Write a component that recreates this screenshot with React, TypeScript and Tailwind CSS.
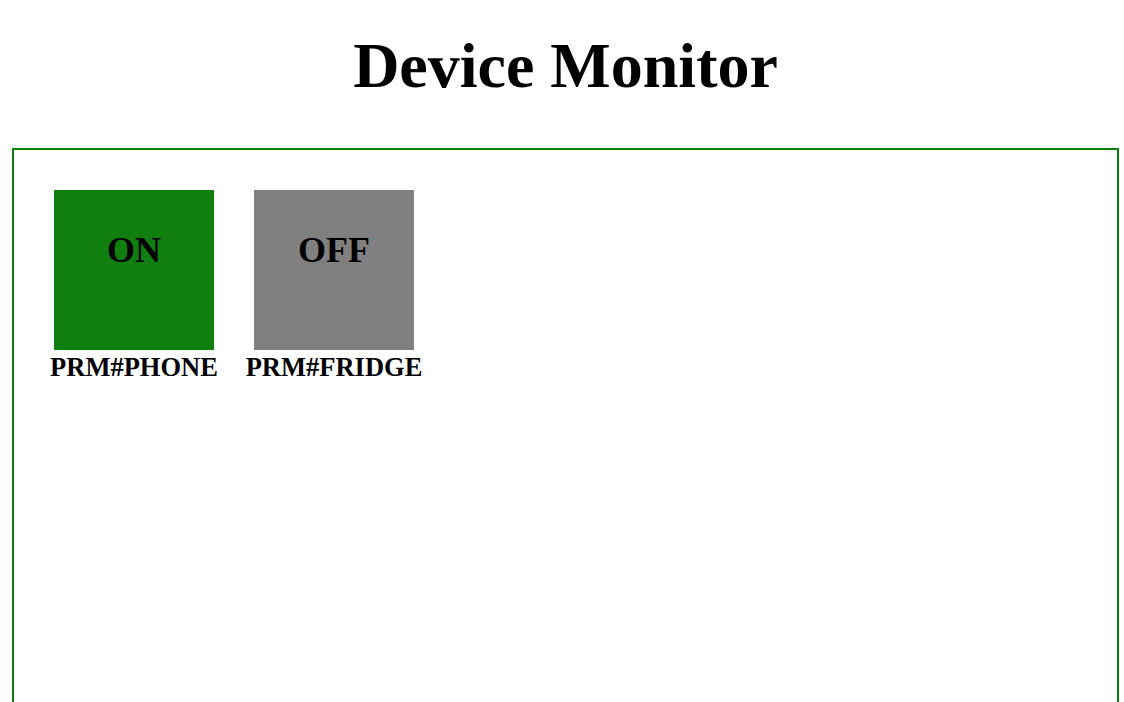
const devices = [
  { name: 'PRM#PHONE', on: true },
  { name: 'PRM#FRIDGE', on: false },
];

function Tile({ name, on }: { name: string; on: boolean }) {
  return (
    <div className="flex w-[160px] flex-col items-center">
      <div
        className={
          on
            ? 'flex h-[160px] w-[160px] justify-center bg-[#107f10] pt-[40px] text-[36px] leading-[41px]'
            : 'flex h-[160px] w-[160px] justify-center bg-[#808080] pt-[40px] text-[36px] leading-[41px]'
        }
      >
        {on ? 'ON' : 'OFF'}
      </div>
      <div className="mt-[2px] whitespace-nowrap text-[26.5px] leading-[30px]">{name}</div>
    </div>
  );
}

export default function App() {
  return (
    <div className="min-h-screen bg-white pt-[29px] font-['Liberation_Serif',serif] font-bold text-black">
      <h1 className="ml-[12px] w-[1107px] text-center text-[64px] leading-[74px]">Device Monitor</h1>
      <div className="ml-[12px] mt-[45px] h-[600px] w-[1107px] border-2 border-[#0d7d0d] p-[40px]">
        <div className="flex gap-[40px]">
          {devices.map((d) => (
            <Tile key={d.name} name={d.name} on={d.on} />
          ))}
        </div>
      </div>
    </div>
  );
}
